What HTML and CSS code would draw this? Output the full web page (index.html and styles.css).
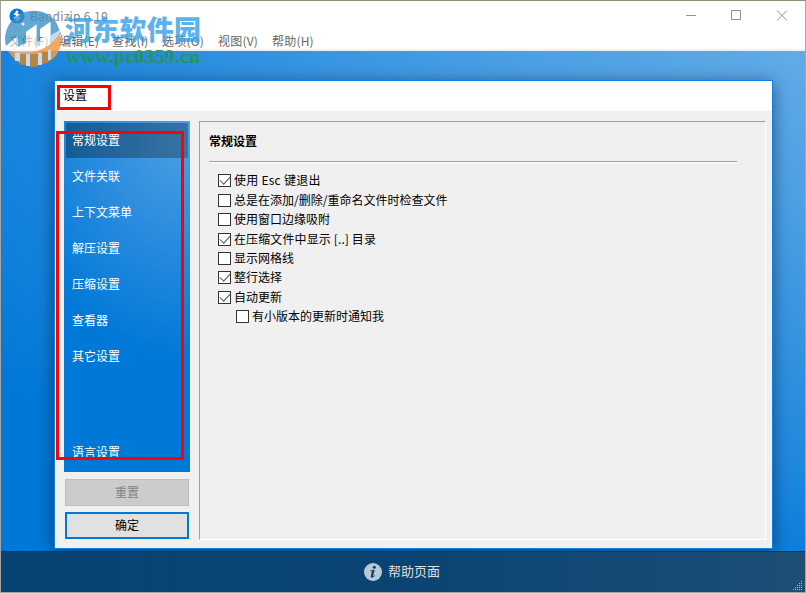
FILE: index.html
```html
<!DOCTYPE html>
<html lang="zh-CN">
<head>
<meta charset="utf-8">
<title>Bandizip 6.10</title>
<link rel="stylesheet" href="styles.css">
</head>
<body>
<div class="window">
  <header class="titlebar">
    <svg class="app-icon" width="16" height="16" viewBox="0 0 16 16"><circle cx="8" cy="8" r="7.6" fill="#0879d9"/><path d="M7.500 2.500 4.500 7H7L6.500 9H4.500L8.500 13.500 12 9H9.500L11.500 6H8.500L9.500 3Z" fill="#fff"/></svg>
    <span class="app-name">Bandizip 6.10</span>
    <svg class="controls" width="110" height="12" viewBox="0 0 110 12" fill="none" stroke="#919191"><path d="M0 5.5H10M45.500 .5H54.500V9.500H45.500ZM91 .5 101 10.500M101 .5 91 10.500"/></svg>
  </header>
  <nav class="menubar">
    <span>文件(F)</span><span>编辑(E)</span><span>查找(I)</span><span>选项(O)</span><span>视图(V)</span><span>帮助(H)</span>
  </nav>
  <main class="workspace">
    <section class="dialog">
      <h1 class="dialog-title">设置</h1>
      <div class="dialog-body">
        <aside class="side">
          <ul class="tabs">
            <li class="active">常规设置</li><li>文件关联</li><li>上下文菜单</li><li>解压设置</li><li>压缩设置</li><li>查看器</li><li>其它设置</li><li class="language">语言设置</li>
          </ul>
          <button class="btn reset" disabled>重置</button>
          <button class="btn ok">确定</button>
        </aside>
        <section class="panel">
          <h2>常规设置</h2>
          <div class="options">
            <label><i class="box on"></i><span class="esc">使用 Esc 键退出</span></label>
            <label><i class="box"></i><span>总是在添加/删除/重命名文件时检查文件</span></label>
            <label><i class="box"></i><span>使用窗口边缘吸附</span></label>
            <label><i class="box on"></i><span class="dots">在压缩文件中显示 [..] 目录</span></label>
            <label><i class="box"></i><span>显示网格线</span></label>
            <label><i class="box on"></i><span>整行选择</span></label>
            <label><i class="box on"></i><span>自动更新</span></label>
            <label class="sub"><i class="box"></i><span>有小版本的更新时通知我</span></label>
          </div>
        </section>
      </div>
    </section>
  </main>
  <footer class="footer">
    <svg width="18" height="18" viewBox="0 0 18 18"><circle cx="9" cy="9" r="9" fill="#b8cad8"/><circle cx="10.300" cy="4.300" r="1.500" fill="#0b4370"/><path d="M6.300 7.500 10.800 6.800 9.200 12.600Q9 13.600 11 12.200L11.300 12.700Q6.200 16.800 6.800 12.900L7.800 8.700Q7.900 8.100 6.200 8Z" fill="#0b4370"/></svg>
    <span>帮助页面</span>
    <svg class="grip" width="11" height="11" viewBox="0 0 11 11" fill="#a9bdcc"><path d="M8 1h1v1H8zM6 3h1v1H6zM8 3h1v1H8zM4 5h1v1H4zM6 5h1v1H6zM8 5h1v1H8zM2 7h1v1H2zM4 7h1v1H4zM6 7h1v1H6zM8 7h1v1H8zM0 9h1v1H0zM2 9h1v1H2zM4 9h1v1H4zM6 9h1v1H6zM8 9h1v1H8z"/></svg>
  </footer>
  <div class="mark mark-title"></div>
  <div class="mark mark-tabs"></div>
  <svg class="watermark" width="210" height="75" viewBox="0 0 210 75">
    <path d="M6 46A28 28 0 0 1 25 12Q46 7 57 24L61 34 50 46V22L40 29V46H36V25L26 32V44L16 47V37Z" fill="#388fc5" opacity=".78"/>
    <path d="M8 46 18 36V46L26 43V32L37 24V42L42 40V29L51 22V35L60 30Q61 44 41 52 22 58 8 50Z" fill="#fff" opacity=".6"/>
    <path d="M8 51Q45 58 60 33 64 56 45 63 29 70 15 60Z" fill="#f39a43" opacity=".85"/>
    <path d="M15 53H20V61H15ZM26 54H30V66H26ZM38 53H42V65H38ZM48 50H51V60H48Z" fill="#c6e4fb" opacity=".9"/>
    <path d="M20 54H26V65H20ZM30 54H38V67H30ZM42 52H48V63H42Z" fill="#ae8446" opacity=".85"/>
    <circle cx="23" cy="24" r="1.500" fill="#fff" opacity=".8"/>
    <text class="wm-name" x="65" y="40" textLength="136">河东软件园</text>
    <text class="wm-url" x="66" y="63" textLength="134" lengthAdjust="spacingAndGlyphs">www.pc0359.cn</text>
  </svg>
</div>
</body>
</html>
```
FILE: styles.css
```css
* { box-sizing: border-box; }
body { margin: 0; font: 12px/18px "Noto Sans CJK SC", sans-serif; color: #000; }
.window { position: relative; display: flex; flex-direction: column; width: 806px; height: 593px; overflow: hidden; border: 1px solid #a5a5a5; border-top-color: #89956e; background: #fff; }
.titlebar { display: flex; flex: none; align-items: center; height: 29px; padding-left: 8px; background: #fff; }
.app-name { margin-left: 5px; font-size: 12px; letter-spacing: .2px; color: #888; }
.controls { margin-left: auto; margin-right: 9px; }
.menubar { display: grid; grid-template-columns: 50px 53px 50px 56px 54px 50px; flex: none; height: 21px; padding: 1px 8px 0; border-bottom: 2px solid #f0f0f0; background: #fff; color: #666; letter-spacing: .2px; line-height: 19px; }
.workspace { flex: none; height: 500px; padding: 29px 0 0 53px; background: radial-gradient(ellipse 1250px 700px at 100% 0, #61abe7 0, #4a9fe4 24%, #2189df 58%, #0078d7 80%); }
.dialog { width: 719px; height: 469px; border: 1px solid #1180dc; background: #f0f0f0; box-shadow: 0 3px 16px rgba(0,20,50,.55); }
.dialog-title { height: 30px; margin: 0; padding: 5px 8px; background: #fff; font-size: 12px; font-weight: 400; line-height: 18px; }
.dialog-body { display: flex; gap: 9px; padding: 10px 6px 0 9px; }
.side { display: flex; flex-direction: column; width: 126px; }
.tabs { display: flex; flex-direction: column; height: 351px; margin: 0 0 7px; padding: 2px; list-style: none; color: #fff; background: radial-gradient(ellipse 195px 240px at 100% 0, #52a2e4, #2e8edf 45%, #0078d7 100%); }
.tabs li { flex: none; height: 36px; padding: 0 6px; line-height: 34px; }
.tabs .active { height: 35px; margin-bottom: 1px; background: linear-gradient(90deg, #145c96, #3972a3); }
.tabs .language { margin-top: 60px; }
.btn { width: 124px; height: 27px; margin: 0 1px; padding: 0 0 1px; font: inherit; }
.reset { border: 1px solid #bfbfbf; background: #ccc; color: #838383; }
.ok { margin-top: 6px; border: 2px solid #0078d7; background: #e1e1e1; color: #000; }
.panel { width: 567px; height: 419px; padding: 10px 28px 0 9px; border: 1px solid; border-color: #a0a0a0 #fff #fff #a0a0a0; }
.panel h2 { height: 30px; margin: 0; font-size: 12px; line-height: 18px; border-bottom: 1px solid #a0a0a0; box-shadow: 0 1px #fff; }
.options { padding: 9px 0 0 9px; }
.options label { display: flex; align-items: center; height: 19.45px; white-space: nowrap; }
.options span { margin-left: 3px; padding-bottom: 1px; }
.esc { letter-spacing: .25px; }
.dots { letter-spacing: .12px; }
.options .sub { padding-left: 18px; }
.box { position: relative; flex: none; width: 13px; height: 13px; border: 1px solid #333; background: #fff; }
.box.on::after { content: ""; position: absolute; left: 1px; top: 1px; width: 9px; height: 5px; border: solid #555; border-width: 0 0 1.500px 1.500px; transform: rotate(-47deg); }
.footer { position: relative; display: flex; flex: none; align-items: center; height: 41px; padding-left: 363px; gap: 6px; border-top: 1px solid #12385c; background: linear-gradient(90deg, #074373, #0b4472 50%, #1d4e76); color: #ddd; font-size: 13px; }
.footer span { padding-bottom: 2px; }
.grip { position: absolute; right: 1px; bottom: 1px; }
.mark { position: absolute; border: 3px solid #f00; }
.mark-title { left: 56px; top: 84px; width: 54px; height: 25px; }
.mark-tabs { left: 55px; top: 130px; width: 128px; height: 329px; }
.watermark { position: absolute; left: -1px; top: -1px; }
.wm-name { font: 900 27px "Noto Sans CJK SC", sans-serif; fill: #339fe8; opacity: .8; }
.wm-url { font: 700 19px "Liberation Serif", serif; fill: #279345; opacity: .85; }
```
